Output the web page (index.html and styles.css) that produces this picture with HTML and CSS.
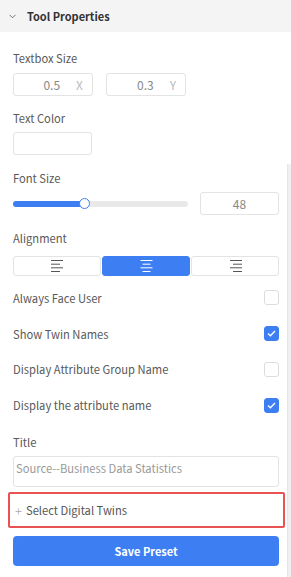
FILE: index.html
```html
<!DOCTYPE html>
<html>
<head>
<meta charset="utf-8">
<link rel="stylesheet" href="styles.css">
</head>
<body>
<div class="header">
  <svg class="chev" width="7" height="5" viewBox="0 0 7 5"><path d="M0.5 0.8 L3.5 3.8 L6.5 0.8" fill="none" stroke="#666" stroke-width="0.9"/></svg>
  <span class="title">Tool Properties</span>
</div>
<div class="panel">
  <div class="field f1">
    <div class="label">Textbox Size</div>
    <div class="row2">
      <div class="inp num"><span class="val">0.5</span><span class="unit">X</span></div>
      <div class="inp num"><span class="val">0.3</span><span class="unit">Y</span></div>
    </div>
  </div>
  <div class="field f2">
    <div class="label">Text Color</div>
    <div class="inp color"></div>
  </div>
  <div class="field f3">
    <div class="label">Font Size</div>
    <div class="slider-row">
      <div class="track"><div class="fill" style="width:41%"></div><div class="knob" style="left:41%"></div></div>
      <div class="inp size">48</div>
    </div>
  </div>
  <div class="field f4">
    <div class="label">Alignment</div>
    <div class="seg">
      <div class="segbtn">
        <svg width="13" height="12" viewBox="0 0 13 12"><g stroke="#555" stroke-width="1"><path d="M0 0.5H12"/><path d="M0 4.2H9"/><path d="M0 7.8H12"/><path d="M0 11.5H9"/></g></svg>
      </div>
      <div class="segbtn active">
        <svg width="13" height="12" viewBox="0 0 13 12"><g stroke="#fff" stroke-width="1"><path d="M0.5 0.5H12.5"/><path d="M2.5 4.2H10.5"/><path d="M0.5 7.8H12.5"/><path d="M2.5 11.5H10.5"/></g></svg>
      </div>
      <div class="segbtn">
        <svg width="13" height="12" viewBox="0 0 13 12"><g stroke="#555" stroke-width="1"><path d="M1 0.5H13"/><path d="M4 4.2H13"/><path d="M1 7.8H13"/><path d="M4 11.5H13"/></g></svg>
      </div>
    </div>
  </div>
  <div class="checks">
    <div class="crow"><span>Always Face User</span><span class="cb"></span></div>
    <div class="crow"><span>Show Twin Names</span><span class="cb on"><svg width="9" height="7" viewBox="0 0 9 7"><path d="M1 3.6 L3.4 5.8 L8 1" fill="none" stroke="#fff" stroke-width="1.4"/></svg></span></div>
    <div class="crow"><span>Display Attribute Group Name</span><span class="cb"></span></div>
    <div class="crow"><span>Display the attribute name</span><span class="cb on"><svg width="9" height="7" viewBox="0 0 9 7"><path d="M1 3.6 L3.4 5.8 L8 1" fill="none" stroke="#fff" stroke-width="1.4"/></svg></span></div>
  </div>
  <div class="field f5">
    <div class="label">Title</div>
    <div class="inp area">Source--Business Data Statistics</div>
  </div>
  <div class="select">
    <span class="plus">+</span><span>Select Digital Twins</span>
  </div>
  <button class="save">Save Preset</button>
</div>
<div class="scrollbar"></div>
</body>
</html>
```
FILE: styles.css
```css
* { box-sizing: border-box; }
html, body { margin: 0; padding: 0; background: #fff; }
body {
  width: 291px;
  height: 577px;
  overflow: hidden;
  position: relative;
  font-family: "Noto Sans CJK SC", "Noto Sans", sans-serif;
  font-size: 11.2px;
  color: #555;
}
.header {
  height: 32px;
  background: #f4f4f5;
  display: flex;
  align-items: center;
  padding-left: 9px;
  gap: 11px;
}
.title {
  font-size: 11px;
  font-weight: 700;
  color: #333;
}
.panel {
  padding: 0 12px 0 13px;
  display: flex;
  flex-direction: column;
}
.label {
  height: 18px;
  line-height: 18px;
  color: #595959;
}
.field { display: flex; flex-direction: column; }
.f1 { margin-top: 17px; gap: 6px; }
.f2 { margin-top: 13px; gap: 5px; }
.f3 { margin-top: 14px; gap: 5px; }
.f4 { margin-top: 14px; gap: 9px; }
.f5 { margin-top: 10px; gap: 5px; }
.inp {
  border: 1px solid #e3e3e3;
  border-radius: 3px;
  height: 23px;
  background: #fff;
  color: #999;
}
.row2 { display: flex; gap: 13px; }
.num {
  width: 80px;
  display: flex;
  align-items: center;
  justify-content: flex-end;
  padding-right: 9px;
  gap: 16px;
}
.num .val { color: #888; font-size: 12px; }
.num .unit { color: #bbb; font-size: 12px; }
.color { width: 79px; }
.slider-row { display: flex; align-items: center; gap: 12px; }
.track {
  position: relative;
  width: 175px;
  height: 6px;
  border-radius: 3px;
  background: #e9e9e9;
}
.fill {
  height: 6px;
  border-radius: 3px;
  background: #3d7ff3;
}
.knob {
  position: absolute;
  top: -2.5px;
  width: 11px;
  height: 11px;
  margin-left: -5.5px;
  border-radius: 50%;
  background: #fff;
  border: 1.5px solid #3d7ff3;
}
.size {
  width: 79px;
  display: flex;
  align-items: center;
  justify-content: center;
  color: #888;
  font-size: 12px;
}
.seg {
  display: flex;
  height: 20px;
  gap: 1px;
}
.segbtn {
  flex: 1;
  border: 1px solid #e3e3e3;
  border-radius: 3px;
  display: flex;
  align-items: center;
  justify-content: center;
  background: #fff;
}
.segbtn.active { background: #3d7ff3; border-color: #3d7ff3; }
.checks { margin-top: 4px; display: flex; flex-direction: column; }
.crow {
  height: 35.8px;
  display: flex;
  align-items: center;
  justify-content: space-between;
  color: #595959;
}
.cb {
  width: 15px;
  height: 15px;
  border: 1px solid #dcdcdc;
  border-radius: 3px;
  display: flex;
  align-items: center;
  justify-content: center;
}
.cb.on { background: #3d7ff3; border-color: #3d7ff3; }
.area {
  height: 31px;
  padding: 0 2px;
  line-height: 22px;
  color: #999;
}
.select {
  margin: 5px -6px 0 -5px;
  height: 36px;
  border: 2.5px solid #e85252;
  border-radius: 2px;
  display: flex;
  align-items: center;
  padding-left: 5px;
  color: #555;
  gap: 4px;
}
.plus { color: #aaa; font-size: 13px; font-weight: 300; }
.save {
  margin-top: 8px;
  height: 30px;
  border: none;
  border-radius: 4px;
  background: #3d7ff3;
  color: #fff;
  font-family: "Noto Sans CJK SC", "Noto Sans", sans-serif;
  font-size: 11px;
  font-weight: 700;
}
.scrollbar {
  position: absolute;
  right: 0;
  top: 164px;
  bottom: 0;
  width: 4px;
  background: #f0f0f0;
  border-left: 1px solid #e6e6e6;
}
```
